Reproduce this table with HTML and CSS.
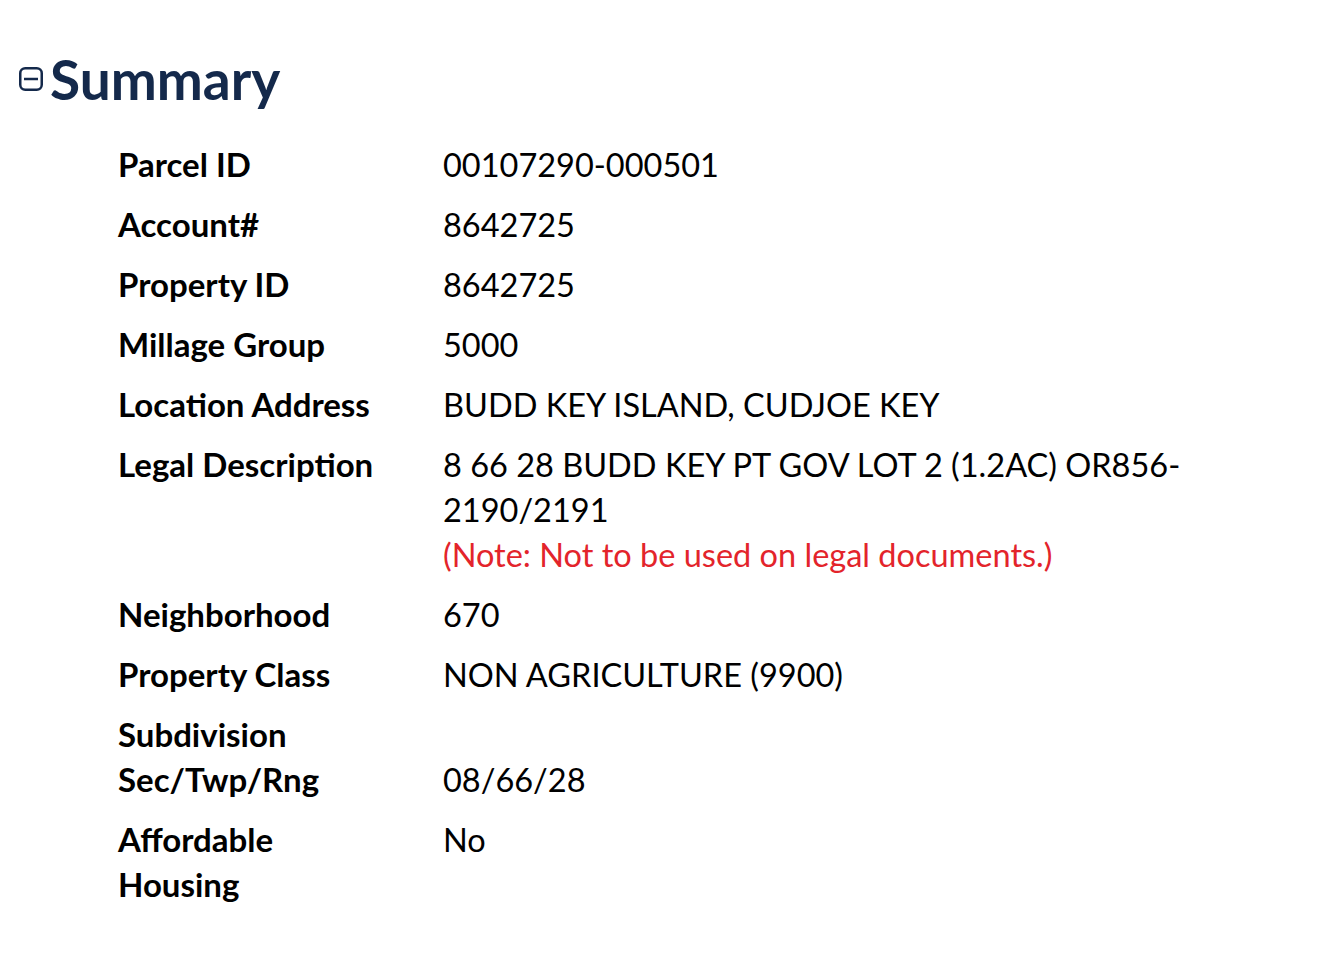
FILE: index.html
```html
<!DOCTYPE html>
<html>
<head>
<meta charset="utf-8">
<link rel="stylesheet" href="styles.css">
</head>
<body>
<section class="module">
  <header class="module-header">
    <svg class="toggle" viewBox="0 0 24 24" width="24" height="24" aria-hidden="true">
      <rect x="1.25" y="1.25" width="21.5" height="21.5" rx="5" ry="5" fill="none" stroke="#14294b" stroke-width="2.5"/>
      <line x1="5" y1="12" x2="19" y2="12" stroke="#14294b" stroke-width="2.5"/>
    </svg>
    <h2 class="title">Summary</h2>
  </header>
  <div class="summary">
    <div class="row"><div class="label">Parcel ID</div><div class="value">00107290-000501</div></div>
    <div class="row"><div class="label">Account#</div><div class="value">8642725</div></div>
    <div class="row"><div class="label">Property ID</div><div class="value">8642725</div></div>
    <div class="row"><div class="label">Millage Group</div><div class="value">5000</div></div>
    <div class="row"><div class="label">Location Address</div><div class="value">BUDD KEY ISLAND, CUDJOE KEY</div></div>
    <div class="row"><div class="label">Legal Description</div><div class="value">8 66 28 BUDD KEY PT GOV LOT 2 (1.2AC) OR856-2190/2191<br><span class="note">(Note: Not to be used on legal documents.)</span></div></div>
    <div class="row"><div class="label">Neighborhood</div><div class="value">670</div></div>
    <div class="row"><div class="label">Property Class</div><div class="value">NON AGRICULTURE (9900)</div></div>
    <div class="row row-tight"><div class="label">Subdivision</div><div class="value"></div></div>
    <div class="row"><div class="label">Sec/Twp/Rng</div><div class="value">08/66/28</div></div>
    <div class="row"><div class="label">Affordable<br>Housing</div><div class="value">No</div></div>
  </div>
</section>
</body>
</html>
```
FILE: styles.css
```css
html, body {
  margin: 0;
  padding: 0;
  background: #fff;
}
body {
  font-family: Lato, "Liberation Sans", sans-serif;
  color: #000;
}
.module {
  padding: 46px 0 0 0;
}
.module-header {
  display: flex;
  align-items: center;
  gap: 7px;
  padding-left: 19px;
}
.toggle {
  display: block;
  flex: none;
}
.title {
  margin: 0;
  font-size: 55px;
  line-height: 66px;
  font-weight: 700;
  color: #14294b;
}
.summary {
  padding: 30px 0 0 118px;
}
.row {
  display: grid;
  grid-template-columns: 325px 760px;
  font-size: 33px;
  line-height: 45px;
  padding-bottom: 15px;
}
.row-tight {
  padding-bottom: 0;
}
.label {
  font-weight: 700;
}
.value {
  font-weight: 400;
  font-size: 32.5px;
}
.note {
  color: #e3242b;
}
```
